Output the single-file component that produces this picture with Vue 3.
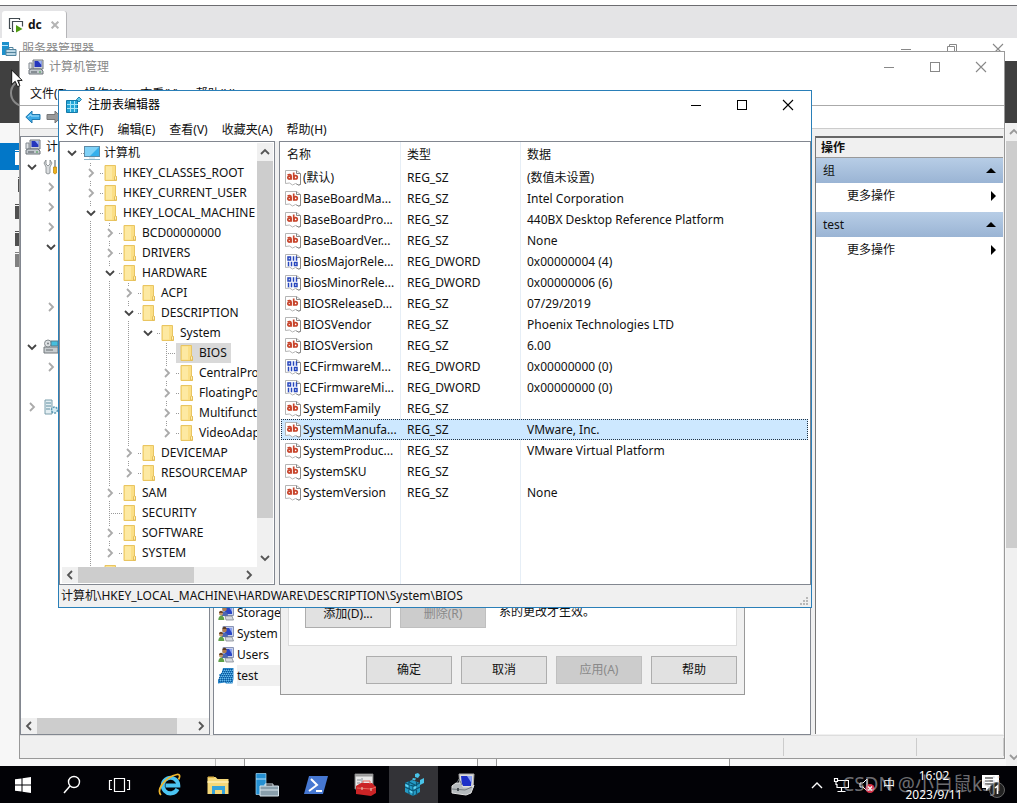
<script setup>
const tree = [
  { name: '计算机', level: 0, state: 'open', icon: 'pc', lines: [] },
  { name: 'HKEY_CLASSES_ROOT', level: 1, state: 'closed', lines: [0] },
  { name: 'HKEY_CURRENT_USER', level: 1, state: 'closed', lines: [0] },
  { name: 'HKEY_LOCAL_MACHINE', level: 1, state: 'open', lines: [0] },
  { name: 'BCD00000000', level: 2, state: 'closed', lines: [0, 1] },
  { name: 'DRIVERS', level: 2, state: 'closed', lines: [0, 1] },
  { name: 'HARDWARE', level: 2, state: 'open', lines: [0, 1] },
  { name: 'ACPI', level: 3, state: 'closed', lines: [0, 1, 1] },
  { name: 'DESCRIPTION', level: 3, state: 'open', lines: [0, 1, 1] },
  { name: 'System', level: 4, state: 'open', lines: [0, 1, 1, 1] },
  { name: 'BIOS', level: 5, state: 'leaf', selected: true, lines: [0, 1, 1, 1, 0] },
  { name: 'CentralProcessor', level: 5, state: 'closed', lines: [0, 1, 1, 1, 0] },
  { name: 'FloatingPointProcessor', level: 5, state: 'closed', lines: [0, 1, 1, 1, 0] },
  { name: 'MultifunctionAdapter', level: 5, state: 'closed', lines: [0, 1, 1, 1, 0] },
  { name: 'VideoAdapterBusses', level: 5, state: 'closed', last: true, lines: [0, 1, 1, 1, 0] },
  { name: 'DEVICEMAP', level: 3, state: 'closed', lines: [0, 1, 1] },
  { name: 'RESOURCEMAP', level: 3, state: 'closed', last: true, lines: [0, 1, 1] },
  { name: 'SAM', level: 2, state: 'closed', lines: [0, 1] },
  { name: 'SECURITY', level: 2, state: 'leaf', lines: [0, 1] },
  { name: 'SOFTWARE', level: 2, state: 'closed', lines: [0, 1] },
  { name: 'SYSTEM', level: 2, state: 'closed', last: true, lines: [0, 1] },
  { name: '', level: 1, state: 'closed', lines: [0] }
]

const values = [
  { name: '(默认)', type: 'REG_SZ', data: '(数值未设置)' },
  { name: 'BaseBoardMa...', type: 'REG_SZ', data: 'Intel Corporation' },
  { name: 'BaseBoardPro...', type: 'REG_SZ', data: '440BX Desktop Reference Platform' },
  { name: 'BaseBoardVer...', type: 'REG_SZ', data: 'None' },
  { name: 'BiosMajorRele...', type: 'REG_DWORD', data: '0x00000004 (4)' },
  { name: 'BiosMinorRele...', type: 'REG_DWORD', data: '0x00000006 (6)' },
  { name: 'BIOSReleaseD...', type: 'REG_SZ', data: '07/29/2019' },
  { name: 'BIOSVendor', type: 'REG_SZ', data: 'Phoenix Technologies LTD' },
  { name: 'BIOSVersion', type: 'REG_SZ', data: '6.00' },
  { name: 'ECFirmwareM...', type: 'REG_DWORD', data: '0x00000000 (0)' },
  { name: 'ECFirmwareMi...', type: 'REG_DWORD', data: '0x00000000 (0)' },
  { name: 'SystemFamily', type: 'REG_SZ', data: '' },
  { name: 'SystemManufa...', type: 'REG_SZ', data: 'VMware, Inc.', selected: true },
  { name: 'SystemProduc...', type: 'REG_SZ', data: 'VMware Virtual Platform' },
  { name: 'SystemSKU', type: 'REG_SZ', data: '' },
  { name: 'SystemVersion', type: 'REG_SZ', data: 'None' }
]

const consoleTree = [
  { level: 0, icon: 'mgmt', label: '计算机管理(本地)' },
  { level: 1, arrow: 'down', icon: 'tools' },
  { level: 2, arrow: 'right' },
  { level: 2, arrow: 'right' },
  { level: 2, arrow: 'right' },
  { level: 2, arrow: 'down' },
  { level: 3 },
  { level: 3 },
  { level: 2, arrow: 'right' },
  { level: 2 },
  { level: 1, arrow: 'down', icon: 'storage' },
  { level: 2, arrow: 'right' },
  { level: 2 },
  { level: 1, arrow: 'right', icon: 'services' }
]

const groups = [
  { name: 'Storage' },
  { name: 'System' },
  { name: 'Users' },
  { name: 'test', selected: true }
]

const actions = ['组', 'test']
const consoleMenus = ['文件(F)', '操作(A)', '查看(V)', '帮助(H)']
const registryMenus = ['文件(F)', '编辑(E)', '查看(V)', '收藏夹(A)', '帮助(H)']
const dialogButtons = [
  { label: '确定' },
  { label: '取消' },
  { label: '应用(A)', disabled: true },
  { label: '帮助' }
]
const systemButtons = [
  { id: 'start', label: '开始' },
  { id: 'search', label: '搜索' },
  { id: 'taskview', label: '任务视图' }
]
const apps = [
  { id: 'ie', label: 'Internet Explorer' },
  { id: 'explorer', label: '文件资源管理器' },
  { id: 'server', label: '服务器管理器' },
  { id: 'powershell', label: 'PowerShell' },
  { id: 'toolbox', label: '管理工具' },
  { id: 'regcube', label: '注册表编辑器', active: true },
  { id: 'mgmtbox', label: '计算机管理' }
]
</script>

<template>
  <div class="page">
    <svg class="defs" aria-hidden="true">
      <symbol id="i-min" viewBox="0 0 12 12"><path d="M1 6.500h10" stroke="currentColor" fill="none" /></symbol>
      <symbol id="i-max" viewBox="0 0 12 12"><rect x="1.500" y="1.500" width="9" height="9" stroke="currentColor" fill="none" /></symbol>
      <symbol id="i-restore" viewBox="0 0 12 12"><path d="M1.500 3.500h7v8h-7zM3.500 3.500v-2h7v8h-2" stroke="currentColor" fill="none" /></symbol>
      <symbol id="i-close" viewBox="0 0 12 12"><path d="M1 1l10 10M11 1L1 11" stroke="currentColor" stroke-width="1.100" fill="none" /></symbol>
      <symbol id="i-cross" viewBox="0 0 12 12"><path d="M1 1l10 10M11 1L1 11" stroke="currentColor" stroke-width="3" fill="none" /></symbol>
      <symbol id="i-right" viewBox="0 0 10 10"><path d="M3 1l4 4-4 4" stroke="currentColor" stroke-width="1.800" fill="none" /></symbol>
      <symbol id="i-left" viewBox="0 0 10 10"><path d="M7 1L3 5l4 4" stroke="currentColor" stroke-width="1.800" fill="none" /></symbol>
      <symbol id="i-down" viewBox="0 0 10 10"><path d="M1 3l4 4 4-4" stroke="currentColor" stroke-width="1.800" fill="none" /></symbol>
      <symbol id="i-up" viewBox="0 0 10 10"><path d="M1 7l4-4 4 4" stroke="currentColor" stroke-width="1.800" fill="none" /></symbol>
      <symbol id="i-folder" viewBox="0 0 18 16">
        <path d="M3 .5h10.500v11h1v4H3z" fill="#fbdf86" stroke="#e9c561" />
        <path d="M4 1.500h6v13H4z" fill="#fde9a2" />
        <path d="M12.500 15V12l1-1.500 1 1.500v3z" fill="#fdeeb5" stroke="#e0b64a" stroke-width=".8" />
      </symbol>
      <symbol id="i-pc" viewBox="0 0 18 16">
        <rect x="1.500" y="1.500" width="15" height="10" fill="#35b0ec" stroke="#5d8aa6" />
        <path d="M2 2h14L7 11H2z" fill="#7fd1f7" />
        <path d="M1 14.500h16" stroke="#8fb6c9" /><path d="M6 13h6" stroke="#b8d6e4" />
      </symbol>
      <symbol id="i-sz" viewBox="0 0 16 16">
        <path d="M.5.5h11l4 3v11l-2 .5-3-1.500-3 1.500-3-2-4 .5z" fill="#fff" stroke="#b5b5b5" />
        <path d="M11.500.5v3h4M15.500 4v10.500l-2 .5-2-1" fill="none" stroke="#888" />
        <circle cx="4.300" cy="7.600" r="1.500" fill="none" stroke="#c8452c" stroke-width="1.700" />
        <path d="M2.600 5c1.400-.8 3.500-.5 3.500 1v3.800M8.700 2.500v7.300" fill="none" stroke="#c8452c" stroke-width="1.700" />
        <circle cx="10.600" cy="7.300" r="1.700" fill="none" stroke="#c8452c" stroke-width="1.700" />
      </symbol>
      <symbol id="i-dword" viewBox="0 0 16 16">
        <path d="M.5.5h11l4 3v11l-2 .5-3-1.500-3 1.500-3-2-4 .5z" fill="#fff" stroke="#b5b5b5" />
        <path d="M11.500.5v3h4M15.500 4v10.500l-2 .5-2-1" fill="none" stroke="#888" />
        <path d="M3 3h2.500v3H3zM9.500 8.500H12v3H9.500zM8.500 2.300v4.400M11.500 2.300v4.400M3.500 7.800v4.400M6.500 7.800v4.400" fill="none" stroke="#2746bd" stroke-width="1.500" />
      </symbol>
      <symbol id="i-reg" viewBox="0 0 16 16">
        <path d="M.5 3.500h11v12H.5z" fill="#24a5d6" stroke="#1379a8" />
        <path d="M1 7.500h11M1 11.500h11M4.500 4v11M8.500 4v11" stroke="#a6e5f8" />
        <path d="M13 0l2.500 2.500L13 5l-2.500-2.500z" fill="#62c8e8" stroke="#1379a8" stroke-width=".9" />
      </symbol>
      <symbol id="i-mgmt" viewBox="0 0 16 16">
        <path d="M5 1h10v9H5z" fill="#cdd1d6" stroke="#72787f" />
        <path d="M6.500 2h7v6h-7z" fill="#2536bd" /><path d="M10 2h3.500v4z" fill="#9db5f4" />
        <path d="M1 4h3v6H1z" fill="#dfe3e6" stroke="#838a91" />
        <path d="M1 11l2-1h10l2 2v3H1z" fill="#c3c9ce" stroke="#6e757b" /><path d="M3 13h6" stroke="#4c535a" /><path d="M11 13h2" stroke="#3d9e48" />
      </symbol>
      <symbol id="i-tools" viewBox="0 0 16 16">
        <path d="M3 1v4l2 2 2-2V1l2 3-2 4v6l-2 1-2-1V8L1 4z" fill="#dadddf" stroke="#7c8387" stroke-width=".8" />
        <path d="M12 1v8" stroke="#8a9093" stroke-width="1.500" /><path d="M10.500 8h3v6l-1.500 1-1.500-1z" fill="#edb21d" stroke="#ba8208" stroke-width=".7" />
      </symbol>
      <symbol id="i-storage" viewBox="0 0 16 16">
        <path d="M1 8h14v6H1z" fill="#c7cccf" stroke="#73797d" /><path d="M3 11h7" stroke="#6a7074" />
        <circle cx="5" cy="4.500" r="3.500" fill="#dde1e3" stroke="#858b8f" /><circle cx="5" cy="4.500" r="1" fill="#7a8084" />
        <path d="M8 2h7v5H8z" fill="#45bede" stroke="#587a88" />
      </symbol>
      <symbol id="i-services" viewBox="0 0 16 16">
        <path d="M2 1h7v14H2z" fill="#e3eef2" stroke="#7b9eac" /><path d="M3 4h5M3 7h5M3 10h4" stroke="#5f8ea0" />
        <circle cx="11.500" cy="11" r="3" fill="#d5eaf2" stroke="#5d9ab3" stroke-width="1.500" stroke-dasharray="2 1" />
      </symbol>
      <symbol id="i-group" viewBox="0 0 16 16">
        <path d="M5 .5h10.500v10H5z" fill="#c6d0ea" stroke="#8a94b5" /><path d="M7 2h7v7H7z" fill="#2b46c6" /><path d="M11 2h3v5z" fill="#8ba2ee" />
        <circle cx="6.500" cy="4" r="2.300" fill="#b07d50" /><path d="M4.500 3c0-3 4-3 4 0z" fill="#5a3a20" />
        <path d="M3.500 11c0-6 6.500-6 6.500 0z" fill="#4c67b3" />
        <circle cx="3" cy="8.500" r="2" fill="#c39468" /><path d="M1 8c0-3 4-3 4 0z" fill="#6b4526" />
        <path d="M.3 15c0-6 6-6 6 0z" fill="#5fa048" />
        <path d="M7 11h7l1.500 4H8z" fill="#d5d9df" stroke="#767c86" stroke-width=".7" />
      </symbol>
      <symbol id="i-groupsel" viewBox="0 0 16 16">
        <path d="M5 0h10.500v11l-1 4.500H8l-1-1-7 1v-4l2-2-1-3 2.500-1z" fill="#2785c8" />
        <path d="M5 1.500h10M4 3.500h11M3 5.500h12M2 7.500h13M1 9.500h14M1 11.500h14M1 13.500h13" stroke="#0c569a" stroke-dasharray="1 1" />
        <path d="M6 2.500h9M5 4.500h10M4 6.500h11M3 8.500h12M2 10.500h13M2 12.500h12M9 14.500h5" stroke="#6fb9e6" stroke-dasharray="1 1" />
      </symbol>
      <symbol id="i-srvsmall" viewBox="0 0 16 16">
        <path d="M1 1h7v13H1z" fill="#1d90cc" /><path d="M1 4.500h6" stroke="#bde6fa" />
        <path d="M5 8.500h10v6H5z" fill="#b9d6e4" stroke="#52849e" /><path d="M8 8V6.500h4V8M5 11.500h10" stroke="#52849e" fill="none" />
      </symbol>
      <symbol id="i-vm" viewBox="0 0 16 16">
        <path d="M3 11.500H1.500v-10h10V3M6 14.500H4.500v-10h10v5" stroke="#414a50" fill="none" stroke-width="1.200" />
        <path d="M8 8l6.500 4L8 15.500z" fill="#4e9a10" />
      </symbol>
      <symbol id="i-back" viewBox="0 0 16 16"><path d="M.8 8L7 2v3.500h8v5H7V14z" fill="#3caae6" stroke="#2279ae" /><path d="M3 8l3-2.500V7h8" stroke="#a5def9" fill="none" /></symbol>
      <symbol id="i-fwd" viewBox="0 0 16 16"><path d="M15.200 8L9 2v3.500H1v5h8V14z" fill="#9a9a9a" stroke="#777" /></symbol>
      <symbol id="i-start" viewBox="0 0 24 24"><path d="M3 6.300L9.500 5.400V11.500H3zM10.500 5.200L19 4v7.500h-8.500zM3 12.500h6.500v6.100L3 17.700zM10.500 12.500H19V20l-8.500-1.200z" fill="#fff" /></symbol>
      <symbol id="i-search" viewBox="0 0 24 24"><circle cx="14" cy="9" r="5.500" fill="none" stroke="#fff" stroke-width="1.400" /><path d="M10 13l-6 7" stroke="#fff" stroke-width="1.500" /></symbol>
      <symbol id="i-taskview" viewBox="0 0 24 24"><path d="M6.500 5.500h10v13h-10zM4 7.500H1.500v9H4M19 7.500h2.500v9H19" fill="none" stroke="#fff" stroke-width="1.200" /></symbol>
      <symbol id="i-ie" viewBox="0 0 24 24">
        <path d="M20.500 16a7.800 7.800 0 1 1 .8-3.500H8.500" fill="none" stroke="#4bc4f2" stroke-width="4" />
        <path d="M4 22C-1 17 8 4 20 1.500c3.500-.5 3 2.500 1.500 5" fill="none" stroke="#f0b62c" stroke-width="1.700" />
      </symbol>
      <symbol id="i-explorer" viewBox="0 0 24 24">
        <path d="M1.500 4h8l2 2h11v15h-21z" fill="#f5d879" /><path d="M2 3.500h6v1.500H2z" fill="#e2b545" />
        <path d="M1.500 8h21v2h-21z" fill="#fbe9a6" /><path d="M6 13h13v8h-3v-4H9v4H6z" fill="#35a4dc" />
      </symbol>
      <symbol id="i-server" viewBox="0 0 24 24">
        <path d="M1 .5h10v21H1z" fill="#2590d2" stroke="#a5daf6" stroke-width=".7" /><path d="M1 6h10" stroke="#b7e2fb" />
        <path d="M5 13h18.500v10H5z" fill="#899fac" stroke="#d8e5ec" /><path d="M10 13v-2h8v2M5 17h18" fill="none" stroke="#dce8ee" />
      </symbol>
      <symbol id="i-powershell" viewBox="0 0 24 24">
        <path d="M5 3h19l-5 18H0z" fill="#4678d2" /><path d="M7 6l6 6-8 6M12 18h6" fill="none" stroke="#fff" stroke-width="2" />
      </symbol>
      <symbol id="i-toolbox" viewBox="0 0 24 24">
        <path d="M2 1h18v15H2z" fill="#e8e8e8" stroke="#777" /><path d="M2 2.500h18" stroke="#999" stroke-width="2" /><path d="M4 7h4M4 10h3M4 13h3M9 5v8" stroke="#8a9198" />
        <path d="M3 13l5-3h11l4 4v6l-5 3-15-2z" fill="#cb2426" /><path d="M4 15l14 1 5-2M10 10V8h7v3" fill="none" stroke="#e8685c" /><path d="M9 14v3M18 15v3" stroke="#e8d1c5" />
      </symbol>
      <symbol id="i-regcube" viewBox="0 0 24 24">
        <path d="M3 10l7-3 8 3v9l-7 4-8-4z" fill="#249bc5" /><path d="M3 10l8 3 7-3M11 13v10M3 14l8 4 7-4M7 8v13M14.500 9v13M6 8.500l8 4" fill="none" stroke="#0b5674" stroke-width="1.200" />
        <path d="M3.500 11l3 1.500v2l-3-1.500zM11.500 14l3-1v2l-3 1.500zM7.500 17l3 1.500v2l-3-1.500z" fill="#62d4f3" />
        <path d="M13 1l3-1 2 2-2 3-3-1zM18 7l4-2v5l-4 2zM11 5l3 .5-1 2-3-1z" fill="#49c3e8" />
      </symbol>
      <symbol id="i-mgmtbox" viewBox="0 0 24 24">
        <path d="M8 1h15l-1 14H9z" fill="#dcdcda" stroke="#aaa" /><path d="M10 3h11l-1 10h-9z" fill="#1d30c8" /><path d="M16 3h5l-.5 7z" fill="#8da4f6" />
        <path d="M1 13l4-3h5l2 4h9l2-2-3 8-5 2-14-2z" fill="#b5babd" stroke="#e2e2e2" /><path d="M1 16l13 1 7-3M6 10l2-4 3 6" fill="none" stroke="#747b80" /><path d="M7 15v3" stroke="#454c51" stroke-width="2" />
      </symbol>
    </svg>

    <header class="host">
      <div class="host-tab">
        <svg class="ic16"><use href="#i-vm" /></svg>
        <b>dc</b>
        <button class="tab-close" aria-label="关闭标签"><svg><use href="#i-cross" /></svg></button>
      </div>
    </header>

    <main class="desktop">
      <section class="window server">
        <div class="titlebar server-title">
          <svg class="ic16"><use href="#i-srvsmall" /></svg>
          <h2>服务器管理器</h2>
          <div class="controls">
            <button aria-label="最小化"><svg><use href="#i-min" /></svg></button>
            <button aria-label="还原"><svg><use href="#i-restore" /></svg></button>
            <button aria-label="关闭"><svg><use href="#i-close" /></svg></button>
          </div>
        </div>
        <div class="server-band"><span class="ring"></span></div>
        <div class="server-body">
          <nav class="server-nav">
            <span class="nav-item active"><i></i></span>
            <span class="nav-item thin"><i></i></span>
            <span class="nav-item"><i></i></span>
            <span class="nav-item"><i></i></span>
            <span class="nav-item pale"><i></i></span>
          </nav>
          <div class="server-tiles"><span></span><span></span></div>
          <div class="vscroll server-scroll">
            <svg><use href="#i-up" /></svg>
            <div class="track"><div class="thumb"></div></div>
            <svg><use href="#i-down" /></svg>
          </div>
        </div>
      </section>

      <section class="window console">
        <div class="titlebar">
          <svg class="ic16"><use href="#i-mgmt" /></svg>
          <h2>计算机管理</h2>
          <div class="controls">
            <button aria-label="最小化"><svg><use href="#i-min" /></svg></button>
            <button aria-label="最大化"><svg><use href="#i-max" /></svg></button>
            <button aria-label="关闭"><svg><use href="#i-close" /></svg></button>
          </div>
        </div>
        <div class="menubar console-menu">
          <button v-for="m in consoleMenus" :key="m">{{ m }}</button>
        </div>
        <div class="toolbar">
          <button aria-label="后退"><svg class="ic16"><use href="#i-back" /></svg></button>
          <button aria-label="前进"><svg class="ic16"><use href="#i-fwd" /></svg></button>
        </div>
        <div class="console-body">
          <div class="pane console-tree">
            <ul>
              <li v-for="(r, i) in consoleTree" :key="i" :class="'lv' + r.level">
                <span v-if="r.level" class="arrow" :class="r.arrow">
                  <svg v-if="r.arrow"><use :href="'#i-' + r.arrow" /></svg>
                </span>
                <svg v-if="r.icon" class="ic16"><use :href="'#i-' + r.icon" /></svg>
                <span v-if="r.label">{{ r.label }}</span>
              </li>
            </ul>
            <div class="hscroll">
              <svg><use href="#i-left" /></svg>
              <div class="track"><div class="thumb wide"></div></div>
              <svg><use href="#i-right" /></svg>
            </div>
          </div>
          <div class="pane console-list">
            <ul>
              <li v-for="g in groups" :key="g.name">
                <svg class="ic16"><use :href="g.selected ? '#i-groupsel' : '#i-group'" /></svg>
                <span :class="{ chosen: g.selected }">{{ g.name }}</span>
              </li>
            </ul>
          </div>
          <aside class="actions">
            <h3>操作</h3>
            <div v-for="a in actions" :key="a" class="action-group">
              <button class="action-head"><span>{{ a }}</span><i class="tri-up"></i></button>
              <button class="action-item"><span>更多操作</span><i class="tri-right"></i></button>
            </div>
          </aside>
        </div>
        <div class="console-status"><span></span><span></span><span></span></div>
      </section>

      <section class="window dialog">
        <div class="dialog-page">
          <button class="push">添加(D)...</button>
          <button class="push" disabled>删除(R)</button>
          <p>系的更改才生效。</p>
        </div>
        <div class="dialog-foot">
          <button v-for="b in dialogButtons" :key="b.label" class="push" :disabled="b.disabled">{{ b.label }}</button>
        </div>
      </section>

      <section class="window registry">
        <div class="titlebar">
          <svg class="ic16"><use href="#i-reg" /></svg>
          <h2>注册表编辑器</h2>
          <div class="controls">
            <button aria-label="最小化"><svg><use href="#i-min" /></svg></button>
            <button aria-label="最大化"><svg><use href="#i-max" /></svg></button>
            <button aria-label="关闭"><svg><use href="#i-close" /></svg></button>
          </div>
        </div>
        <div class="menubar">
          <button v-for="m in registryMenus" :key="m">{{ m }}</button>
        </div>
        <div class="registry-body">
          <div class="pane key-pane">
            <div class="key-main">
              <ul class="keys">
                <li v-for="(k, i) in tree" :key="i">
                  <span v-for="(on, j) in k.lines" :key="j" class="guide" :class="{ on }"></span>
                  <span class="guide node" :class="[k.state, { root: k.level === 0, on: k.level > 0 && k.level !== 4, last: k.last }]">
                    <svg v-if="k.state !== 'leaf'"><use :href="k.state === 'open' ? '#i-down' : '#i-right'" /></svg>
                  </span>
                  <span class="key" :class="{ chosen: k.selected }">
                    <svg><use :href="k.icon ? '#i-pc' : '#i-folder'" /></svg>{{ k.name }}
                  </span>
                </li>
              </ul>
              <div class="vscroll">
                <svg><use href="#i-up" /></svg>
                <div class="track"><div class="thumb"></div></div>
                <svg><use href="#i-down" /></svg>
              </div>
            </div>
            <div class="hscroll">
              <svg><use href="#i-left" /></svg>
              <div class="track"><div class="thumb"></div></div>
              <svg><use href="#i-right" /></svg>
            </div>
          </div>
          <div class="pane value-pane">
            <table>
              <thead>
                <tr><th>名称</th><th>类型</th><th>数据</th></tr>
              </thead>
              <tbody>
                <tr v-for="v in values" :key="v.name" :class="{ chosen: v.selected }">
                  <td>
                    <svg class="ic16"><use :href="v.type === 'REG_SZ' ? '#i-sz' : '#i-dword'" /></svg>{{ v.name }}
                  </td>
                  <td>{{ v.type }}</td>
                  <td>{{ v.data }}</td>
                </tr>
              </tbody>
            </table>
          </div>
        </div>
        <div class="registry-status">
          <span>计算机\HKEY_LOCAL_MACHINE\HARDWARE\DESCRIPTION\System\BIOS</span>
          <svg class="grip" viewBox="0 0 9 9"><path d="M6 0h2v2H6zM3 3h2v2H3zM6 3h2v2H6zM0 6h2v2H0zM3 6h2v2H3zM6 6h2v2H6z" fill="#b8b8b8" /></svg>
        </div>
      </section>

      <svg class="pointer" viewBox="0 0 12 19"><path d="M.7 1v14.500l3.500-3.200 2.300 5.400 2.400-1-2.300-5.300h4.600z" fill="#fff" stroke="#111" /></svg>
    </main>

    <footer class="taskbar">
      <button v-for="s in systemButtons" :key="s.id" class="sys" :aria-label="s.label"><svg><use :href="'#i-' + s.id" /></svg></button>
      <button v-for="a in apps" :key="a.id" class="app" :class="{ active: a.active }" :aria-label="a.label"><svg><use :href="'#i-' + a.id" /></svg></button>
      <div class="tray">
        <svg class="t-up" viewBox="0 0 12 8"><path d="M1 7l5-5 5 5" fill="none" stroke="#fff" stroke-width="1.400" /></svg>
        <svg class="t-net" viewBox="0 0 16 16"><path d="M5 3.500h10.500v7H4V7M8.500 11v3M4.500 14.500h8M1.500 1.500h3v3h-3zM3 5v3" fill="none" stroke="#fff" stroke-width="1.200" /></svg>
        <svg class="t-snd" viewBox="0 0 16 16"><path d="M1 6h3l4-4v12l-4-4H1z" fill="none" stroke="#fff" /><circle cx="11" cy="11.500" r="4.500" fill="#d8334a" /><path d="M9 9.500l4 4M13 9.500l-4 4" stroke="#fff" stroke-width="1.200" /></svg>
        <span class="ime">中</span>
        <div class="clock"><span>16:02</span><span>2023/9/11</span></div>
        <svg class="t-note" viewBox="0 0 26 26"><path d="M1 3h17v13H8l-3 3v-3H1z" fill="#fff" /><path d="M4 6h8M4 9h8M4 12h8" stroke="#111" /><circle cx="16" cy="18" r="7.500" fill="#222" stroke="#666" /><path d="M14 16l2.500-2v8" fill="none" stroke="#fff" stroke-width="1.600" /></svg>
      </div>
      <span class="watermark">CSDN @小白鼠ksji</span>
    </footer>
  </div>
</template>

<style>
body { margin: 0; background: #fff; }
</style>

<style scoped>
.page {
  display: flex;
  flex-direction: column;
  min-height: 100vh;
  overflow: hidden;
  font: 12px/16px "Noto Sans", "Noto Sans CJK SC", sans-serif;
  color: #111;
}
.page * { box-sizing: border-box; }
.defs { position: absolute; width: 0; height: 0; }
button { font: inherit; color: inherit; background: none; border: 0; padding: 0; }
ul { list-style: none; margin: 0; padding: 0; }
h2, h3, p { margin: 0; font: inherit; }
svg { flex: none; display: block; }
.ic16 { width: 16px; height: 16px; }

.host {
  display: flex;
  align-items: flex-end;
  height: 33px;
  margin-top: 5px;
  border-top: 1px solid #6c6c70;
  background: #e4e4e6;
  padding-left: 2px;
}
.host-tab {
  display: flex;
  align-items: center;
  width: 65px;
  height: 27px;
  padding-left: 6px;
  background: #fff;
  border-right: 1px solid #b5b5b8;
  border-radius: 3px 3px 0 0;
}
.host-tab b { margin-left: 4px; }
.tab-close { margin-left: 9px; color: #b4b4b4; }
.tab-close svg { width: 8px; height: 8px; }

.desktop { position: relative; flex: 1; min-height: 728px; overflow: hidden; background: #f7f7f7; }
.window { position: absolute; display: flex; flex-direction: column; }
.titlebar { display: flex; align-items: center; height: 29px; flex: none; padding-left: 8px; }
.titlebar h2 { margin-left: 5px; flex: 1; white-space: nowrap; }
.controls { display: flex; height: 100%; }
.controls button { width: 46px; display: grid; place-items: center; }
.controls svg { width: 12px; height: 12px; }
.menubar { display: flex; gap: 14px; align-items: center; height: 22px; flex: none; padding-left: 7px; white-space: nowrap; }
.pane { background: #fff; border: 1px solid #828790; overflow: hidden; }

.server { inset: 0 -4px 0 0; background: #f7f7f7; color: #888; }
.server-title { height: 23px; background: #fff; padding: 0 0 2px 1px; }
.server-band { height: 62px; flex: none; background: #404040; overflow: hidden; }
.ring { display: block; width: 28px; height: 28px; margin: 18px 0 0 10px; border: 2px solid #888; border-radius: 50%; }
.server-body { flex: 1; display: flex; }
.server-nav { width: 215px; padding-top: 20px; }
.nav-item { display: flex; align-items: center; height: 27px; padding-left: 15px; }
.nav-item i { width: 16px; height: 16px; background: #505050; border-top: 3px double #f7f7f7; }
.nav-item.active { background: #0277c8; }
.nav-item.active i { background: #fff; border-color: #0277c8; }
.nav-item.thin i { margin-left: 3px; }
.nav-item.pale { align-items: flex-start; }
.nav-item.pale i { background: #808080; }
.server-tiles { flex: 1; display: flex; gap: 18px; padding: 0 276px 0 28px; border-left: 1px solid #bbb; }
.server-tiles span { flex: 1; background: #fff; border: 1px solid #999; border-width: 0 1px; }

.vscroll { display: flex; flex-direction: column; align-items: center; width: 16px; background: #f0f0f0; color: #555; }
.vscroll svg, .hscroll svg { width: 10px; height: 10px; margin: 4px 3px; }
.vscroll .track { flex: 1; align-self: stretch; }
.vscroll .thumb { height: 92%; background: #cdcdcd; }
.hscroll { display: flex; align-items: center; height: 16px; flex: none; background: #f0f0f0; color: #555; }
.hscroll .track { flex: 1; height: 100%; }
.hscroll .thumb { width: 71%; height: 100%; background: #cdcdcd; }
.hscroll .thumb.wide { width: 90%; }
.key-pane .hscroll { padding-right: 16px; }
.server-scroll { width: 15px; color: #999; }
.server-scroll .thumb { height: 67%; }

.console { inset: 13px 12px 7px 19px; background: #fff; border: 1px solid #999; }
.console .titlebar { color: #888; }
.console-menu { padding: 2px 0 0 10px; height: 24px; gap: 17px; }
.toolbar { display: flex; align-items: center; gap: 5px; height: 24px; flex: none; padding-left: 5px; border-top: 1px solid #aaa; border-bottom: 1px solid #ccc; }
.console-body { flex: 1; display: flex; gap: 3px; min-height: 0; padding-top: 7px; background: #f0f0f0; }
.console-tree { display: flex; flex-direction: column; width: 190px; flex: none; }
.console-tree ul { flex: 1; }
.console-tree li { display: flex; align-items: center; height: 20px; white-space: nowrap; gap: 5px; padding-left: 4px; }
.console-tree li.lv1 { padding-left: 6px; }
.console-tree li.lv2 { padding-left: 25px; }
.arrow { width: 11px; color: #aaa; }
.arrow svg { width: 10px; height: 10px; }
.arrow.down { color: #444; }
.console-list { flex: 1; display: flex; flex-direction: column; justify-content: flex-end; padding: 0 0 48px 4px; }
.console-list li { display: flex; align-items: center; height: 21px; gap: 3px; }
.console-list .chosen { background: #f0f0f0; padding: 3px 48px 2px 0; }
.actions { width: 188px; margin: 0 1px 1px 1px; flex: none; background: #fff; border-left: 1px solid #777; border-top: 2px solid #666; }
.actions h3 { height: 20px; padding-left: 5px; line-height: 20px; font-weight: bold; background: #f0f0f0; border-bottom: 1px solid #999; }
.action-group { display: flex; flex-direction: column; }
.action-group + .action-group { margin-top: 4px; }
.action-head, .action-item { display: flex; align-items: center; justify-content: space-between; height: 25px; padding: 0 7px; }
.action-head { background: linear-gradient(#b7cde6, #9ab4d4); }
.action-item { padding-left: 31px; }
.tri-up { border: 5px solid transparent; border-top: 0; border-bottom-color: #000; }
.tri-right { border: 5px solid transparent; border-right: 0; border-left-color: #000; }
.console-status { display: flex; height: 23px; flex: none; background: #f0f0f0; border-top: 1px solid #ddd; }
.console-status span { flex: 1; border-right: 1px solid #ccc; margin: 2px 0; }
.console-status span:nth-child(2) { flex: 0 0 133px; }
.console-status span:nth-child(3) { flex: 0 0 87px; }

.dialog { left: 280px; right: 272px; bottom: 71px; background: #f0f0f0; border: 1px solid #999; padding: 0 7px 10px; }
.dialog-page { display: flex; align-items: flex-end; gap: 9px; height: 90px; padding: 0 16px 17px; background: #fff; border: 1px solid #dcdcdc; border-top: 0; }
.dialog-page p { margin-left: 4px; padding-bottom: 8px; }
.dialog-foot { display: flex; justify-content: flex-end; gap: 9px; padding-top: 10px; }
.push { width: 86px; height: 28px; background: #e1e1e1; border: 1px solid #adadad; }
.push:disabled { background: #ccc; border-color: #bfbfbf; color: #898989; }

.registry { inset: 52px 205px 158px 58px; background: #fff; border: 1px solid #2a7fb8; }
.registry .titlebar { height: 28px; color: #000; padding-left: 7px; }
.registry .titlebar h2 { margin-left: 6px; }
.registry-body { flex: 1; display: flex; gap: 4px; min-height: 0; background: #f0f0f0; }
.key-pane { display: flex; flex-direction: column; width: 216px; flex: none; padding: 1px 1px 1px 2px; }
.key-main { flex: 1; display: flex; min-height: 0; }
.keys { flex: 1; min-width: 0; overflow: hidden; }
.keys li { display: flex; height: 20px; line-height: 20px; white-space: nowrap; }
.guide { position: relative; flex: none; width: 19px; display: grid; place-items: center; color: #aaa; }
.guide.on { background: repeating-linear-gradient(#999 0 1px, transparent 1px 2px) 9px 0 / 1px 100% no-repeat; }
.guide.node svg { width: 10px; height: 10px; }
.guide.node.on svg { background: #fff; outline: 2px solid #fff; }
.guide.open { color: #444; }
.guide.leaf { background: repeating-linear-gradient(#999 0 1px, transparent 1px 2px) 9px 0 / 1px 100% no-repeat, repeating-linear-gradient(90deg, #999 0 1px, transparent 1px 2px) 9px 10px / 10px 1px no-repeat; }
.guide.last { background-size: 1px 50%; }
.key { display: flex; align-items: center; padding-right: 4px; background: repeating-linear-gradient(90deg, #999 0 1px, transparent 1px 2px) 0 10px / 4px 1px no-repeat; }
.key svg { width: 18px; height: 16px; margin: 0 3px 0 2px; }
.key.chosen { background: #d9d9d9; }

.value-pane { flex: 1; padding-left: 1px; background: linear-gradient(#e6eef6, #e6eef6) 120px 0 / 1px 100% no-repeat, linear-gradient(#e6eef6, #e6eef6) 240px 0 / 1px 100% no-repeat, #fff; }
table { width: calc(100% - 2px); border-collapse: collapse; table-layout: fixed; }
th, td { height: 21px; padding: 0 0 0 6px; text-align: left; font-weight: normal; line-height: 20px; white-space: nowrap; }
th { height: 25px; }
th:nth-child(-n+2) { width: 120px; }
td:first-child { display: flex; align-items: center; gap: 2px; padding-left: 4px; }
tr.chosen { background: #cde8ff; outline: 1px dotted #234; outline-offset: -1px; }
.registry-status { display: flex; align-items: center; justify-content: space-between; height: 22px; flex: none; padding: 0 2px; background: #f0f0f0; }
.grip { width: 9px; height: 9px; align-self: flex-end; margin-bottom: 1px; }

.pointer { position: absolute; left: 11px; top: 31px; width: 12px; height: 19px; }

.taskbar { position: relative; display: flex; align-items: stretch; height: 37px; flex: none; background: #020206; color: #fff; }
.taskbar button { display: grid; place-items: center; }
.taskbar button svg { width: 24px; height: 24px; }
.sys { width: 48px; }
.app { width: 49px; }
.app.active { background: #333337; }
.tray { display: flex; align-items: center; margin-left: auto; padding-right: 10px; }
.t-up { width: 12px; height: 8px; margin-right: 10px; }
.t-net { width: 16px; height: 16px; margin-right: 10px; }
.t-snd { width: 16px; height: 16px; margin-right: 8px; }
.clock { display: flex; flex-direction: column; align-items: center; width: 78px; line-height: 19px; }
.t-note { width: 26px; height: 26px; margin-left: 8px; }
.watermark { position: absolute; right: 16px; top: 6px; font-size: 19px; line-height: 24px; color: rgba(200, 200, 205, .55); white-space: nowrap; }
</style>
